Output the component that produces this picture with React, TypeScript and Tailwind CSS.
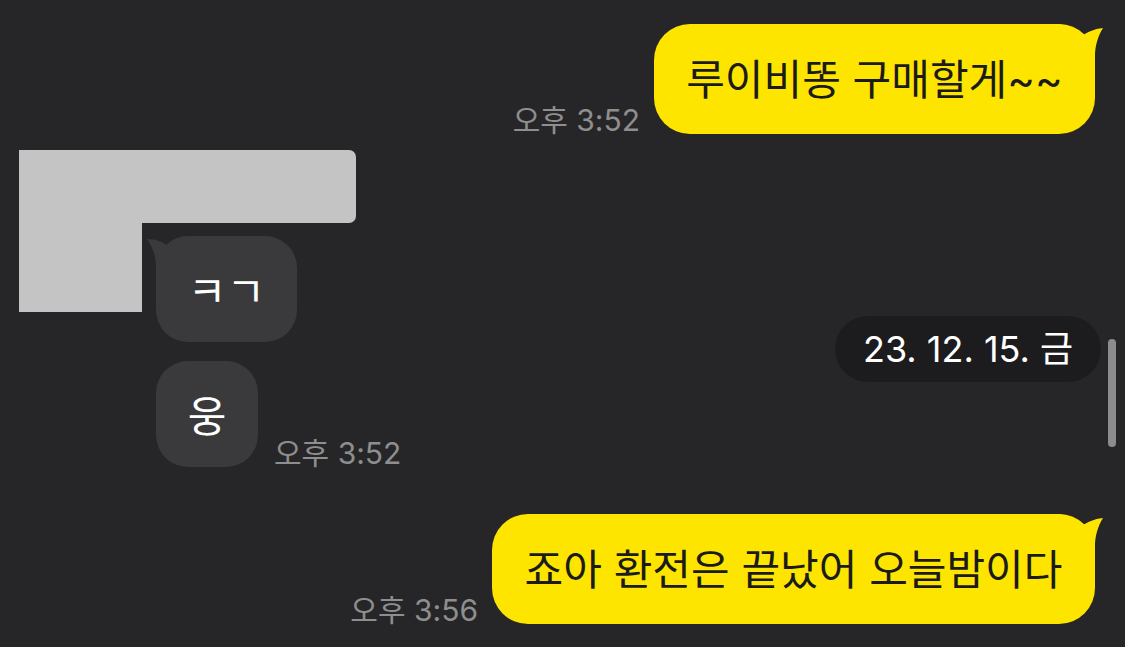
import React from "react";

const FONT = { fontFamily: 'Inter, "Noto Sans CJK KR", sans-serif' };

function RightTail() {
  return (
    <svg
      className="absolute right-[-9px] top-0"
      width="50"
      height="46"
      viewBox="0 0 50 46"
    >
      <path
        d="M0,0 C15,0 22,6 28,12 C33,8 40,5 49,4 C44,12 41,22 41,32 L41,46 L0,46 Z"
        fill="#fee500"
      />
    </svg>
  );
}

function LeftTail() {
  return (
    <svg
      className="absolute left-[-10px] top-0"
      width="50"
      height="46"
      viewBox="0 0 50 46"
    >
      <path
        d="M50,0 C35,0 28,6 23,11 C18,6 10,3 1,3 C6,10 10,20 10,30 L10,46 L50,46 Z"
        fill="#3a3a3c"
      />
    </svg>
  );
}

function Time({ children }: { children: React.ReactNode }) {
  return (
    <div className="text-[30px] leading-[32px] text-[#8e8e8e] whitespace-nowrap mb-[-2px]">
      {children}
    </div>
  );
}

export default function App() {
  return (
    <div
      className="relative w-[1125px] h-[647px] overflow-hidden bg-[#262628] flex flex-col pt-[24px]"
      style={FONT}
    >
      {/* Row 1 */}
      <div className="flex justify-end items-end gap-[14px] pr-[30px]">
        <Time>오후 3:52</Time>
        <div className="relative w-[441px] h-[110px] rounded-[36px] bg-[#fee500] flex items-center justify-center text-[42px] text-[#1b1b1b] whitespace-nowrap">
          <RightTail />
          <span className="relative">루이비똥 구매할게~~</span>
        </div>
      </div>

      {/* Row 2 */}
      <div className="flex mt-[16px] pl-[19px]">
        <div className="w-[123px] h-[162px] bg-[#c4c4c4]" />
        <div className="flex flex-col">
          <div className="w-[214px] h-[73px] bg-[#c4c4c4] rounded-r-[7px]" />
          <div className="flex flex-col pl-[14px] mt-[13px]">
            <div className="relative w-[141px] h-[106px] rounded-[32px] bg-[#3a3a3c] flex items-center justify-center pt-[4px] text-[42px] text-white">
              <LeftTail />
              <span className="relative">ㅋㄱ</span>
            </div>
            <div className="flex items-end gap-[16px] mt-[19px]">
              <div className="w-[102px] h-[106px] rounded-[32px] bg-[#3a3a3c] flex items-center justify-center pt-[4px] text-[42px] text-white">
                웅
              </div>
              <Time>오후 3:52</Time>
            </div>
          </div>
        </div>
      </div>

      {/* Row 3 */}
      <div className="flex justify-end items-end gap-[14px] pr-[30px] mt-[47px]">
        <Time>오후 3:56</Time>
        <div className="relative w-[603px] h-[110px] rounded-[36px] bg-[#fee500] flex items-center justify-center text-[42px] text-[#1b1b1b] whitespace-nowrap">
          <RightTail />
          <span className="relative">죠아 환전은 끝났어 오늘밤이다</span>
        </div>
      </div>

      {/* Floating date header */}
      <div className="absolute left-[835px] top-[316px] w-[266px] h-[66px] rounded-full bg-[#1c1c1e] flex items-center justify-center text-[36px] text-white whitespace-nowrap">
        23. 12. 15. 금
      </div>

      {/* Scrollbar */}
      <div className="absolute right-[9px] top-[339px] w-[8px] h-[108px] rounded-full bg-[#8c8c8c]" />
    </div>
  );
}
